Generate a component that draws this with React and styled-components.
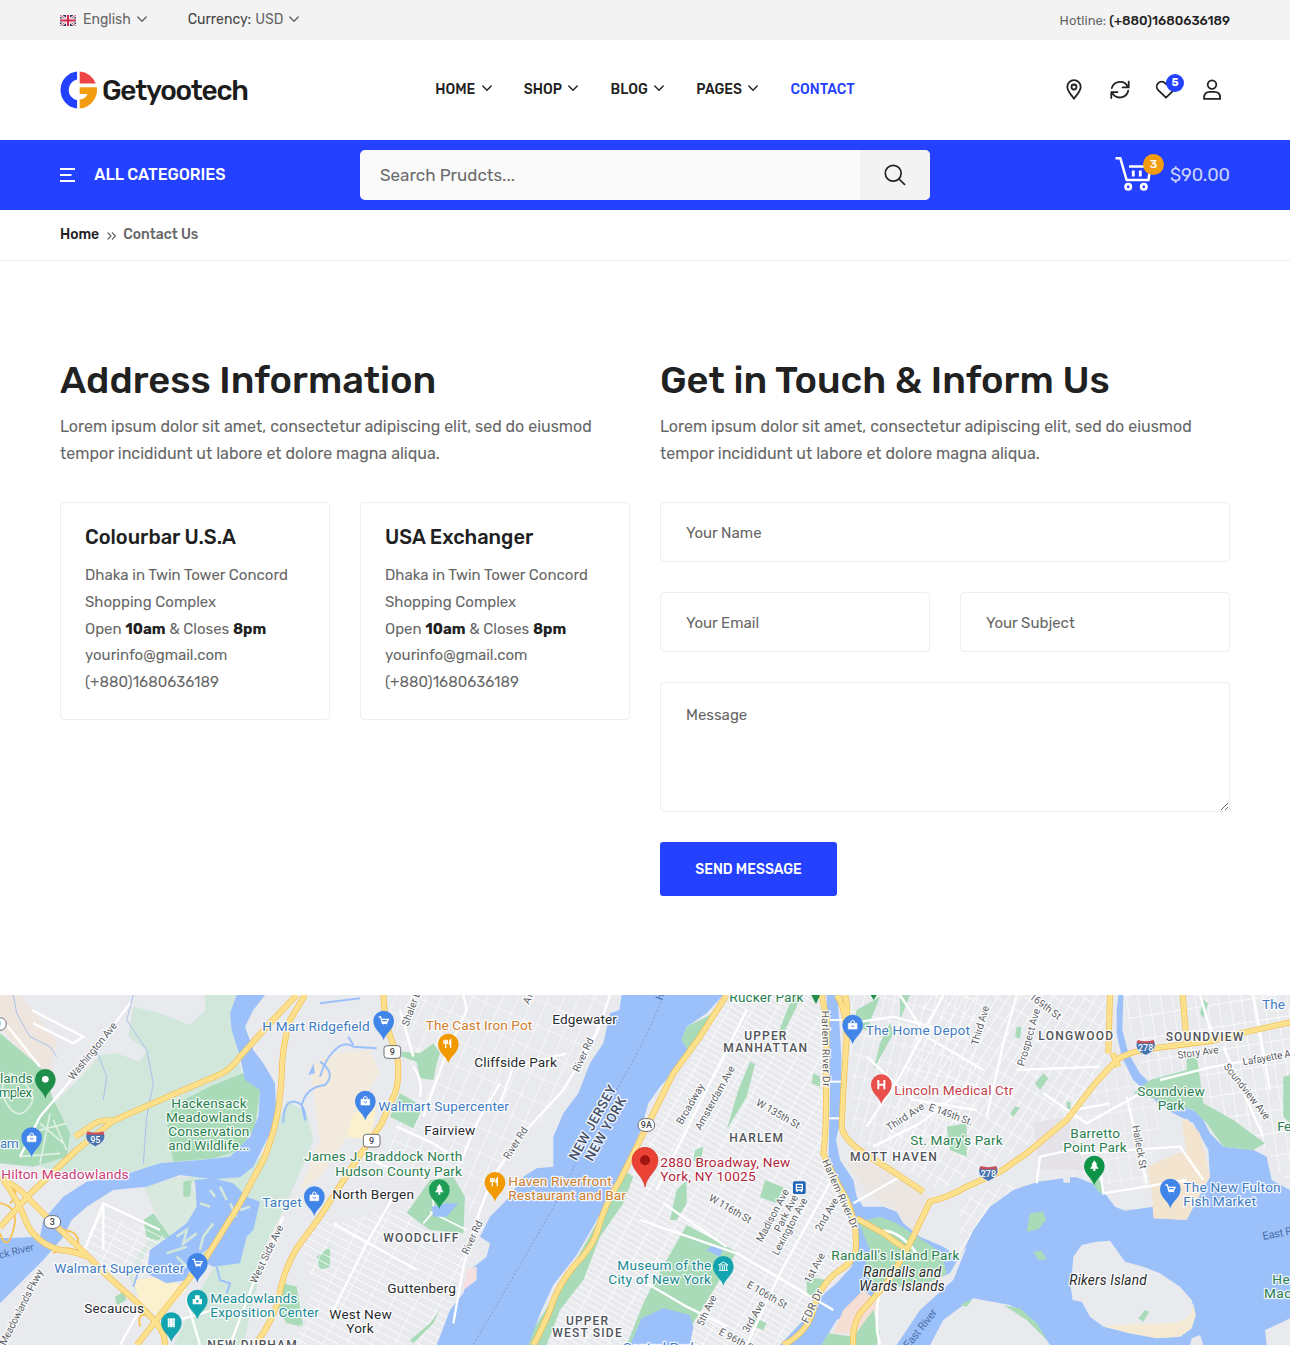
import React from "react";
import styled, { createGlobalStyle } from "styled-components";

const BLUE = "#2441ff";
const INK = "#212121";
const GREY = "#666";

const GlobalStyle = createGlobalStyle`
  *, *::before, *::after { box-sizing: border-box; }
  body {
    margin: 0;
    background: #fff;
    color: ${GREY};
    font-family: Rubik, Roboto, "Liberation Sans", sans-serif;
    font-size: 14px;
    line-height: 1.2;
  }
  a { color: inherit; text-decoration: none; }
  h2, h3, p { margin: 0; }
`;

const Page = styled.div`
  width: 1290px;
  height: 1345px;
  overflow: hidden;
  display: flex;
  flex-direction: column;
`;

/* ---------- top bar ---------- */
const TopBar = styled.div`
  flex: none;
  height: 40px;
  padding: 0 60px;
  display: flex;
  align-items: center;
  justify-content: space-between;
  background: #f3f3f3;
`;
const TopGroup = styled.div`
  display: flex;
  align-items: center;
  gap: 41px;
`;
const Picker = styled.a`
  display: flex;
  align-items: center;
  gap: 6px;
`;
const PickerText = styled.span`
  color: ${GREY};
`;
const PickerLabel = styled.span`
  color: #444;
  margin-right: -2px;
`;
const FlagArt = styled.svg`
  margin-top: 2px;
`;
const Hotline = styled.div`
  font-size: 13px;
  padding-top: 1px;
`;
const HotlineNumber = styled.a`
  color: ${INK};
  font-weight: 500;
`;

/* ---------- header ---------- */
const Header = styled.header`
  flex: none;
  height: 100px;
  padding: 0 60px;
  display: grid;
  grid-template-columns: 1fr auto 1fr;
  align-items: center;
`;
const Logo = styled.a`
  display: flex;
  align-items: center;
  gap: 5px;
  margin-left: -1px;
`;
const LogoText = styled.span`
  padding-top: 2px;
  font-size: 28px;
  font-weight: 500;
  letter-spacing: -1.25px;
  color: #1c1c1c;
`;
const Nav = styled.nav`
  display: flex;
  gap: 32.3px;
`;
const NavLink = styled.a`
  display: flex;
  align-items: center;
  gap: 6.3px;
  font-weight: 500;
  color: ${(p) => (p.$active ? BLUE : INK)};
  svg { margin-bottom: 2px; }
`;
const Actions = styled.div`
  display: flex;
  justify-content: flex-end;
  gap: 10px;
`;
const IconButton = styled.a`
  position: relative;
  width: 36px;
  height: 36px;
  display: grid;
  place-items: center;
  color: #222;
`;
const Badge = styled.span`
  position: absolute;
  top: ${(p) => p.$top}px;
  left: ${(p) => p.$left}px;
  width: ${(p) => p.$size}px;
  height: ${(p) => p.$size}px;
  display: grid;
  place-items: center;
  border-radius: 50%;
  background: ${(p) => p.$bg};
  color: #fff;
  font-size: ${(p) => p.$font}px;
  font-weight: ${(p) => p.$weight || 500};
`;

/* ---------- blue bar ---------- */
const BlueBar = styled.div`
  flex: none;
  height: 70px;
  padding: 0 60px;
  display: grid;
  grid-template-columns: 300px 570px 1fr;
  align-items: center;
  background: ${BLUE};
`;
const Categories = styled.a`
  display: flex;
  align-items: center;
  gap: 18.3px;
  color: #fff;
  font-size: 16px;
  font-weight: 500;
  line-height: 20px;
`;
const Search = styled.form`
  display: flex;
  height: 50px;
  border-radius: 5px;
  overflow: hidden;
  background: #fafafb;
`;
const SearchInput = styled.input`
  flex: 1;
  border: 0;
  outline: 0;
  padding: 0 20px;
  background: none;
  font: 400 17px/1.2 Rubik, Roboto, sans-serif;
  &::placeholder { color: #6b6b6b; opacity: 1; }
`;
const SearchButton = styled.button`
  width: 70px;
  border: 0;
  padding: 0 0 1px;
  display: grid;
  place-items: center;
  background: #f3f3f3;
  color: #222;
`;
const Cart = styled.a`
  position: relative;
  justify-self: end;
  width: 115px;
  height: 36px;
  display: flex;
  align-items: center;
  justify-content: space-between;
  color: #cdd4fb;
  font-size: 18px;
`;
const CartTotal = styled.span`
  padding-top: 2px;
`;

/* ---------- breadcrumb ---------- */
const Breadcrumb = styled.div`
  flex: none;
  height: 51px;
  padding: 1px 60px 0;
  display: flex;
  align-items: center;
  gap: 7.500px;
  border-bottom: 1px solid #eee;
  font-weight: 500;
`;
const Crumb = styled.a`
  color: ${(p) => (p.$home ? INK : GREY)};
`;

/* ---------- contact section ---------- */
const Main = styled.main`
  flex: none;
  height: 734px;
  padding: 95px 60px 0;
  display: grid;
  grid-template-columns: 570px 570px;
  column-gap: 30px;
  align-items: start;
`;
const Title = styled.h2`
  color: ${INK};
  font-size: 38px;
  font-weight: 500;
  line-height: 48px;
`;
const Lead = styled.p`
  margin: 9px 0 35px;
  font-size: 16px;
  line-height: 27px;
`;
const Cards = styled.div`
  display: grid;
  grid-template-columns: 1fr 1fr;
  gap: 30px;
`;
const Card = styled.article`
  height: 218px;
  padding: 22px 24px;
  border: 1px solid #eeeeef;
  border-radius: 4px;
  font-size: 15px;
  line-height: 26.8px;
  white-space: nowrap;
`;
const CardTitle = styled.h3`
  margin-bottom: 13px;
  color: ${INK};
  font-size: 20px;
  font-weight: 500;
  line-height: 24px;
`;
const Strong = styled.strong`
  color: ${INK};
  font-weight: 700;
`;
const Form = styled.form`
  display: grid;
  grid-template-columns: 1fr 1fr;
  gap: 30px;
`;
const Field = styled.input`
  grid-column: span ${(p) => p.$span || 1};
  min-width: 0;
  height: 60px;
  padding: 1px 25px 0;
  border: 1px solid #eeeeef;
  border-radius: 4px;
  outline: 0;
  font: 400 15px/1.2 Rubik, Roboto, sans-serif;
  &::placeholder { color: ${GREY}; opacity: 1; }
`;
const MessageField = styled.textarea`
  grid-column: span 2;
  display: block;
  height: 130px;
  padding: 23px 25px;
  border: 1px solid #eeeeef;
  border-radius: 4px;
  outline: 0;
  resize: vertical;
  font: 400 15px/18px Rubik, Roboto, sans-serif;
  &::placeholder { color: ${GREY}; opacity: 1; }
`;
const SendButton = styled.button`
  width: 177px;
  height: 54px;
  padding: 2px 0 0;
  border: 0;
  border-radius: 3px;
  background: ${BLUE};
  color: #fff;
  font: 500 14px/1 Rubik, Roboto, sans-serif;
`;

/* ---------- map ---------- */
const MapFrame = styled.section`
  flex: none;
  height: 350px;
  overflow: hidden;
  svg { display: block; }
`;
const MapText = styled.text`
  font-family: Roboto, "Liberation Sans", sans-serif;
  font-size: ${(p) => p.$size}px;
  font-weight: ${(p) => p.$weight};
  font-style: ${(p) => (p.$italic ? "italic" : "normal")};
  fill: ${(p) => p.$fill};
  stroke: ${(p) => p.$halo};
  stroke-width: ${(p) => (p.$halo === "none" ? 0 : 8)}px;
  stroke-linejoin: round;
  paint-order: stroke;
`;

/* ---------- icons ---------- */
const Chevron = ({ size = 10 }) => (
  <svg width={size} height="7" viewBox="0 0 10 7" fill="none" stroke="currentColor" strokeWidth="1.4" strokeLinecap="round" strokeLinejoin="round">
    <path d="M.8 1 5 5.3 9.2 1" />
  </svg>
);
const Flag = () => (
  <FlagArt width="17" height="11" viewBox="0 0 17 11">
    <rect width="16" height="11" fill="#2b2f63" />
    <path d="M0 0 16 11M16 0 0 11" stroke="#fff" strokeWidth="2.6" />
    <path d="M0 0 16 11M16 0 0 11" stroke="#c8405c" strokeWidth=".9" />
    <path d="M8 0V11M0 5.5H16" stroke="#fff" strokeWidth="4" />
    <path d="M8 0V11M0 5.5H16" stroke="#cc2b4b" strokeWidth="2.2" />
  </FlagArt>
);
const LogoMark = () => (
  <svg width="38" height="38" viewBox="0 0 38 38">
    <path d="M18.1.6A18.5 18.5 0 0 0 18.1 37.4V29.200A10.500 10.500 0 0 1 18.1 8.600Z" fill={BLUE} />
    <path d="M20.700 .6V12.6H36.8A18.5 18.5 0 0 0 20.700 .6Z" fill="#ee4443" />
    <path d="M20.700 16.3H37.8A18.4 18.4 0 0 1 20.700 37.4V28.6A9 9 0 0 0 28.500 23H20.700Z" fill="#f29c12" />
  </svg>
);
const PinIcon = () => (
  <svg width="24" height="24" viewBox="0 0 24 24" fill="none" stroke="currentColor" strokeWidth="1.8" strokeLinejoin="round">
    <path d="M12 20.7C9.2 16.7 5.3 12.900 5.300 8.900a6.700 6.700 0 0 1 13.400 0c0 4-3.900 7.800-6.700 11.800Z" />
    <circle cx="12" cy="9" r="2.500" />
  </svg>
);
const RefreshIcon = () => (
  <svg width="24" height="24" viewBox="0 0 24 24" fill="none" stroke="currentColor" strokeWidth="1.8" strokeLinecap="round" strokeLinejoin="round">
    <path d="M3.800 10.100A8.600 8.600 0 0 1 19.800 8.600M20.700 3.600V9.400H14.600" />
    <path d="M20.200 12.700A8.600 8.600 0 0 1 4.200 14.900M3.300 20V14.200H9.400" />
  </svg>
);
const HeartIcon = () => (
  <svg width="24" height="24" viewBox="0 0 24 24" fill="none" stroke="currentColor" strokeWidth="1.8" strokeLinejoin="round">
    <path d="M12 19.600 4.200 12.100A4.900 4.900 0 0 1 11.200 5.200L12 6 12.800 5.200A4.900 4.900 0 0 1 19.800 12.100Z" />
  </svg>
);
const UserIcon = () => (
  <svg width="24" height="24" viewBox="0 0 24 24" fill="none" stroke="currentColor" strokeWidth="1.8" strokeLinejoin="round">
    <circle cx="12" cy="6.600" r="4.300" />
    <path d="M4.100 20.900V19.600Q4.100 13.900 9.600 13.900H14.600Q20.100 13.900 20.100 19.600V20.900Z" />
  </svg>
);
const MenuIcon = () => (
  <svg width="16" height="14" viewBox="0 0 16 14" stroke="#fff" strokeWidth="2">
    <path d="M0 1H15M0 7H11.500M0 13H15" />
  </svg>
);
const SearchIcon = () => (
  <svg width="22" height="22" viewBox="0 0 22 22" fill="none" stroke="currentColor" strokeWidth="1.700" strokeLinecap="round">
    <circle cx="9.200" cy="9.200" r="7.900" />
    <path d="M15 15 20.500 20.400" />
  </svg>
);
const CartIcon = () => (
  <svg width="38" height="36" viewBox="0 0 38 36" fill="none" stroke="#fff" strokeWidth="2.500" strokeLinejoin="round">
    <path d="M.500 1.200H5.300L11.600 23H33.500L35.300 9.500H14" />
    <path d="M18.300 13.500V19.500M25.300 13.500V19.500" strokeWidth="2.800" />
    <circle cx="13.200" cy="29.800" r="2.700" strokeWidth="2.600" />
    <circle cx="28.800" cy="29.800" r="2.700" strokeWidth="2.600" />
  </svg>
);
const CrumbIcon = () => (
  <svg width="9" height="8" viewBox="0 0 9 8" fill="none" stroke="#666" strokeWidth="1.200">
    <path d="M.600.500 4 4 .600 7.500M5 .500 8.400 4 5 7.500" />
  </svg>
);

/* ---------- map data: one unit is a third of a pixel ---------- */
const WATER = "#9cc0fa";
const PARK = "#a9dbb9";
const MARSH = "#d1e7dc";

const GLYPHS = {
  cart: <path d="M-15 -12H-9L-4 7H11M-7 -5H14L10 3H-5M-2 12h1M9 12h1" fill="none" stroke="#fff" strokeWidth="4" />,
  bag: (
    <>
      <path d="M-13 -5H13V12H-13Z" fill="#fff" stroke="#fff" strokeWidth="2" />
      <path d="M-6 -5Q-6 -14 0 -14Q6 -14 6 -5" fill="none" stroke="#fff" strokeWidth="3" />
      <path d="M-5 2Q0 7 5 2" fill="none" stroke="#4285e8" strokeWidth="3" />
    </>
  ),
  food: <path d="M-8 -13V12M-13 -13V-3H-3V-13M7 12V-13Q2 -8 3 0H7" fill="none" stroke="#fff" strokeWidth="4" />,
  tree: <path d="M0 -17 9 -4H5L13 8H3V15H-3V8H-13L-5 -4H-9Z" fill="#fff" />,
  dot: <circle r="10" fill="#fff" />,
  hospital: <path d="M-9 -14V14M9 -14V14M-9 0H9" fill="none" stroke="#fff" strokeWidth="6" />,
  museum: <path d="M-14 -4 0 -13 14 -4ZM-10 -1V10M-3 -1V10M3 -1V10M10 -1V10M-14 12H14" fill="none" stroke="#fff" strokeWidth="3" />,
  camera: (
    <>
      <path d="M-14 -3H14V13H-14ZM-7 -3V-14H7V-3" fill="#fff" />
      <circle cy="4" r="4" fill="#12a4af" />
    </>
  ),
  ticket: <path d="M-11 -14H11V14H-11ZM-5 -14V14M5 -14V14" fill="#fff" stroke="#12a4af" strokeWidth="2" strokeDasharray="4 3" />,
};
const PINS = [
  [136, 268, "#1e8e4a", "dot"], [95, 443, "#4285e8", "bag"], [943, 620, "#4285e8", "bag"],
  [592, 820, "#4285e8", "cart"], [592, 930, "#12a4af", "camera"], [514, 998, "#12a4af", "ticket"],
  [1151, 93, "#4285e8", "cart"], [1345, 162, "#f29900", "food"], [1096, 333, "#4285e8", "bag"],
  [1318, 599, "#1e9e57", "tree"], [1485, 577, "#f29900", "food"], [2170, 829, "#12a4af", "museum"],
  [2558, 105, "#4285e8", "bag"], [2644, 284, "#e8504b", "hospital"], [3283, 528, "#0f9347", "tree"],
  [3511, 597, "#4285e8", "cart"],
];
const Pin = ({ x, y, fill, glyph }) => (
  <g transform={`translate(${x} ${y})`}>
    <path d="M0 58C-4 38 -31 26 -31 0A31 31 0 0 1 31 0C31 26 4 38 0 58Z" fill={fill} />
    {GLYPHS[glyph]}
  </g>
);

const INKMAP = "#2a2c2f", AREA = "#50545a", PGREEN = "#2b8050", SHOP = "#3f7cc4", FOOD = "#d07d2c", ROAD = "#5b6066", TEAL = "#1a8b95";
/* x, baseline y, drawn width, text, colour, size, rotation, options */
const LABELS = [
  [0, 278, 98, "lands", PGREEN, 41], [-4, 320, 100, "mplex", PGREEN, 41], [0, 473, 56, "am", SHOP, 41],
  [4, 567, 382, "Hilton Meadowlands", "#cc3d78", 41],
  [514, 354, 226, "Hackensack", PGREEN, 41], [498, 396, 258, "Meadowlands", PGREEN, 41],
  [505, 438, 243, "Conservation", PGREEN, 41], [505, 480, 244, "and Wildlife...", PGREEN, 41],
  [787, 124, 322, "H Mart Ridgefield", SHOP, 41], [912, 514, 475, "James J. Braddock North", PGREEN, 41],
  [1006, 558, 380, "Hudson County Park", PGREEN, 41],
  [787, 651, 118, "Target", SHOP, 41], [163, 848, 390, "Walmart Supercenter", SHOP, 41],
  [631, 938, 261, "Meadowlands", TEAL, 41], [631, 980, 326, "Exposition Center", TEAL, 41],
  [253, 969, 179, "Secaucus", INKMAP, 41], [622, 1076, 268, "NEW DURHAM", AREA, 36, 0, { w: 500 }],
  [1277, 119, 320, "The Cast Iron Pot", FOOD, 41], [1657, 101, 194, "Edgewater", INKMAP, 41],
  [1423, 230, 248, "Cliffside Park", INKMAP, 41], [1135, 362, 392, "Walmart Supercenter", SHOP, 41],
  [1273, 434, 153, "Fairview", INKMAP, 41], [997, 626, 245, "North Bergen", INKMAP, 41],
  [1150, 755, 225, "WOODCLIFF", AREA, 36, 0, { w: 500 }], [1162, 909, 206, "Guttenberg", INKMAP, 41],
  [988, 986, 187, "West New", INKMAP, 41], [1039, 1029, 82, "York", INKMAP, 41],
  [1525, 587, 310, "Haven Riverfront", FOOD, 41], [1525, 630, 353, "Restaurant and Bar", FOOD, 41],
  [1698, 1004, 126, "UPPER", AREA, 36, 0, { w: 500 }], [1657, 1041, 208, "WEST SIDE", AREA, 36, 0, { w: 500 }],
  [1852, 840, 282, "Museum of the", TEAL, 41], [1825, 882, 308, "City of New York", TEAL, 41],
  [1868, 1086, 224, "Central Park", SHOP, 41],
  [2188, 37, 222, "Rucker Park", PGREEN, 41], [2233, 150, 126, "UPPER", AREA, 36, 0, { w: 500 }],
  [2170, 187, 251, "MANHATTAN", AREA, 36, 0, { w: 500 }], [2188, 456, 161, "HARLEM", AREA, 36, 0, { w: 500 }],
  [1981, 532, 390, "2880 Broadway, New", "#b3263a", 41], [1981, 573, 286, "York, NY 10025", "#b3263a", 41],
  [2597, 135, 313, "The Home Depot", SHOP, 41], [2683, 315, 357, "Lincoln Medical Ctr", "#c6414b", 41],
  [2731, 465, 277, "St. Mary's Park", PGREEN, 41], [2550, 513, 260, "MOTT HAVEN", AREA, 36, 0, { w: 500 }],
  [2494, 810, 384, "Randall's Island Park", PGREEN, 41],
  [2590, 861, 234, "Randalls and", INKMAP, 41, 0, { italic: true }], [2578, 903, 256, "Wards Islands", INKMAP, 41, 0, { italic: true }],
  [3115, 150, 224, "LONGWOOD", AREA, 36, 0, { w: 500 }], [3497, 152, 233, "SOUNDVIEW", AREA, 36, 0, { w: 500 }],
  [3786, 57, 69, "The", SHOP, 41], [3412, 318, 202, "Soundview", PGREEN, 41], [3473, 360, 80, "Park", PGREEN, 41],
  [3211, 444, 149, "Barretto", PGREEN, 41], [3190, 486, 190, "Point Park", PGREEN, 41],
  [3550, 607, 292, "The New Fulton", SHOP, 41], [3550, 649, 218, "Fish Market", SHOP, 41],
  [3208, 885, 232, "Rikers Island", INKMAP, 41, 0, { italic: true }],
  [3832, 423, 42, "Fe", PGREEN, 41], [3817, 882, 52, "He", PGREEN, 41], [3792, 925, 82, "Mac", PGREEN, 41],
  [219, 272, 212, "Washington Ave", ROAD, 31, -51], [768, 882, 190, "West Side Ave", ROAD, 31, -64],
  [16, 1068, 250, "Meadowlands Pkwy", ROAD, 31, -63], [0, 806, 106, "ck River", "#4a6fa8", 31, -14],
  [1225, 110, 110, "Shaler B", ROAD, 31, -70], [1586, 45, 40, "An", ROAD, 31, -65],
  [1736, 248, 108, "River Rd", ROAD, 31, -65], [1526, 510, 108, "River Rd", ROAD, 31, -57], [1403, 796, 108, "River Rd", ROAD, 31, -65],
  [1729, 514, 250, "NEW JERSEY", "#455068", 40, -61, { w: 500 }], [1777, 516, 212, "NEW YORK", "#455068", 40, -61, { w: 500 }],
  [2046, 406, 136, "Broadway", ROAD, 31, -60], [2102, 422, 214, "Amsterdam Ave", ROAD, 31, -61],
  [2266, 344, 146, "W 135th St", ROAD, 31, 30], [2124, 630, 142, "W 116th St", ROAD, 31, 30],
  [2286, 758, 174, "Madison Ave", ROAD, 31, -62], [2340, 728, 120, "Park Ave", ROAD, 31, -63], [2334, 798, 190, "Lexington Ave", ROAD, 31, -62],
  [2462, 726, 110, "2nd Ave", ROAD, 31, -60], [2430, 882, 98, "1st Ave", ROAD, 31, -62],
  [2238, 890, 134, "E 106th St", ROAD, 31, 30], [2154, 1032, 122, "E 96th St", ROAD, 31, 28],
  [2108, 1010, 98, "5th Ave", ROAD, 31, -64], [2244, 1030, 104, "3rd Ave", ROAD, 31, -60],
  [2465, 62, 228, "Harlem River Dr", ROAD, 31, 89], [2466, 514, 224, "Harlem River Dr", ROAD, 31, 66],
  [2424, 1002, 108, "FDR Dr", ROAD, 33, -65],
  [2668, 424, 128, "Third Ave", ROAD, 31, -33], [2784, 360, 138, "E 149th St.", ROAD, 31, 20],
  [2934, 168, 122, "Third Ave", ROAD, 31, -74], [3072, 230, 178, "Prospect Ave", ROAD, 31, -74],
  [3086, 24, 110, "169th St", ROAD, 31, 37], [3534, 206, 124, "Story Ave", ROAD, 31, -8],
  [3730, 226, 160, "Lafayette Av", ROAD, 31, -10], [3670, 230, 204, "Soundview Ave", ROAD, 31, 52],
  [3397, 408, 132, "Halleck St", ROAD, 31, 80], [3790, 750, 112, "East Riv", "#4a6fa8", 33, -11],
  [2726, 1078, 140, "East River", "#4a6fa8", 33, -52], [1986, 32, 30, "Hu", "#4a6fa8", 31, -70],
];
const MapLabel = ({ row: [x, y, w, text, fill, size, rot = 0, o = {}] }) => (
  <MapText
    x={x} y={y} textLength={w} transform={rot ? `rotate(${rot} ${x} ${y})` : undefined}
    $fill={fill} $size={size} $weight={o.w || 400} $italic={o.italic} $halo={fill === "#4a6fa8" ? "none" : "rgba(255,255,255,.85)"}
  >
    {text}
  </MapText>
);

const HIGHWAYS = [
  "M890 15 800 110 720 200Q690 245 640 262L500 322 340 392 230 480 90 612 0 712",
  "M915 15 870 90Q845 170 845 260Q838 400 790 510L720 640 620 800 540 900 410 1065",
  "M0 560 60 600 150 690 240 775 330 865 420 945 470 1000Q495 1030 495 1065",
  "M10 570Q60 640 80 700Q110 760 180 780Q230 785 260 800",
  "M340 392Q300 385 270 410L225 440",
  "M1150 15 1155 80Q1165 130 1190 190Q1202 260 1185 310L1145 400 1070 510 960 680 890 775Q850 840 835 930Q820 990 765 1065",
  "M2180 15 2100 140 2020 250 1960 370 1925 440 1860 570Q1815 640 1795 715Q1780 770 1725 825Q1670 890 1650 960Q1625 1020 1600 1065",
  "M2510 15Q2540 60 2540 140L2530 300 2525 410Q2530 450 2600 495L2680 545 2770 605",
  "M2535 15Q2545 50 2540 90",
  "M2465 15 2480 90 2478 340Q2478 430 2470 490Q2500 560 2535 620Q2570 690 2568 760Q2570 810 2520 840Q2460 880 2440 960Q2420 1030 2350 1065",
  "M2560 1065Q2555 1010 2580 970L2660 880 2720 780 2790 635Q2850 620 2900 590L3000 545 3080 490 3200 390 3290 275 3350 210Q3390 180 3500 170L3640 152 3720 130 3870 97",
  "M2570 685 2650 730 2720 780",
  "M3330 15 3325 190", "M3548 15 3560 160", "M3338 190 3355 230",
];
const LOCAL_ROADS = [
  "M390 40 230 250 120 380 60 500", "M0 80 120 230M95 60 250 140 220 160 100 100", "M850 680 760 880 690 1065",
  "M1390 15 1400 60 1340 190 1270 380M1830 15 1790 130 1690 300 1560 440 1480 560 1440 660 1390 830 1360 1000",
  "M1200 60 1240 200M1240 230Q1270 270 1260 320M1500 280 1430 400 1380 520M1700 190 1540 230 1500 340",
  "M1190 410 1300 460 1390 520M1090 500 1230 560M1000 700 1250 840M1180 620 1100 760 1000 960",
  "M1920 690 2210 790 2500 960M1990 640 2180 770M2240 1065 2340 850 2500 560M1970 600 2100 340 2240 60",
  "M1940 880 2060 950 2180 1010", "M2550 100 2680 80 2900 140M2600 200 2740 330 2930 360M2700 15 2780 140 2950 240M2620 470 2760 400 2900 290",
  "M2830 15 2700 260 2600 410M2560 640 2700 560", "M3050 15 3010 160 2960 380M3050 240 3300 230M3130 310 3260 400 3440 300",
  "M3380 320 3440 580M3240 490 3540 470 3610 570M3300 530 3310 610 3560 570", "M3140 440 3220 360 3330 340M3110 580 3120 500 3260 470",
  "M3480 270 3640 230 3870 190M3670 170 3790 440M3600 15 3640 150M3760 15 3810 300",
  "M250 790 310 640 480 720M310 640V780M430 940 360 1065M560 930 600 1065M500 1000 640 960",
];

const Streets = ({ id, w, h, rot, sw = 4 }) => (
  <pattern id={id} width={w} height={h} patternUnits="userSpaceOnUse" patternTransform={`rotate(${rot})`}>
    <path d={`M0 0H${w}M0 0V${h}`} stroke="#fff" strokeWidth={sw} fill="none" />
  </pattern>
);
const Shield = ({ x, y, text, kind }) => (
  <g transform={`translate(${x} ${y})`}>
    {kind === "i" ? (
      <>
        <path d="M-26 -20Q0 -14 26 -20Q38 8 0 24Q-38 8 -26 -20Z" fill="#4673ad" stroke="#fff" strokeWidth="2" />
        <path d="M-24 -22Q0 -15 24 -22L27 -12H-27Z" fill="#c8505a" />
      </>
    ) : (
      <rect x="-25" y="-19" width="50" height="38" rx={kind === "round" ? 19 : 9} fill="#fff" stroke="#6b6f74" strokeWidth="3" />
    )}
    <MapText x="0" y={kind === "i" ? 12 : 10} textAnchor="middle" $size={kind === "i" ? 27 : 27} $weight={500} $fill={kind === "i" ? "#fff" : "#44484d"} $halo="none">
      {text}
    </MapText>
  </g>
);

const CityMap = () => (
  <svg width="1290" height="350" viewBox="0 15 3870 1050" preserveAspectRatio="none">
    <defs>
      <Streets id="manhattan" w={62} h={17} rot={30} />
      <Streets id="jersey" w={64} h={22} rot={27} />
      <Streets id="cliffs" w={42} h={70} rot={24} sw={3.500} />
      <Streets id="bronx" w={46} h={28} rot={-58} sw={3.500} />
      <Streets id="sound" w={34} h={68} rot={-9} />
      <Streets id="melrose" w={30} h={62} rot={14} sw={3.500} />
    </defs>
    <rect y="15" width="3870" height="1050" fill="#e9eaee" />

    {/* land tints and wetlands */}
    <path d="M0 15H60L170 150 150 260 60 180 0 110Z" fill="#eee5df" />
    <path d="M400 50 480 70 570 105 615 60 615 15H710L700 120 725 250 780 300 770 420 700 500 500 520 300 570 120 530 210 450 150 350 235 270 300 195 350 190 420 215 440 180 385 140Z" fill={MARSH} />
    <path d="M860 330 920 370 940 450 860 640 800 760 730 1065H520L600 900 700 740 640 640 560 560 720 560 800 480Z" fill={MARSH} />
    <path d="M420 570 560 560 600 640 540 730 440 780 400 860 480 940 420 930 380 850 480 700Z" fill="#d9e9e0" />
    <path d="M930 230 1000 190 1110 180 1140 250 1080 340 1040 440 960 560 900 600 960 450Z" fill="#f1eadd" />
    <path d="M400 870 500 860 560 900 480 980 420 940ZM1060 370 1130 350 1110 450 1040 440Z" fill="#fbf1cf" />
    <path d="M0 130 60 180 130 240 160 330 210 430 200 500 100 530 0 520Z" fill={PARK} />
    <path d="M30 250Q-10 290 20 340T80 360 90 300 30 250M120 400 190 460M150 370 120 520M80 430 200 400M60 500 180 490M160 390 200 480" fill="none" stroke="#dff0e5" strokeWidth="5" />
    <path d="M500 390 520 345 640 285 740 245 780 300 765 410 720 480 640 505 520 515Z" fill={PARK} />
    <path d="M430 690 460 670 510 740 470 750 440 740ZM550 575 575 570 570 620 550 620ZM345 920 370 905 380 930 350 945ZM850 880 890 890 910 1010 860 1000 830 950ZM950 800 990 770V830L960 840Z" fill={PARK} />

    {/* street grids */}
    <path d="M230 800 300 660 500 740 440 860 380 860ZM880 1065 960 830 1000 700 1260 640 1300 760 1420 780 1350 960 1310 1065ZM940 880 900 760 980 680 1050 800Z" fill="url(#jersey)" />
    <path d="M1160 15H1830L1790 130 1690 320 1540 480 1440 640 1390 680 1300 560 1130 560 1200 400 1260 280 1200 160Z" fill="url(#cliffs)" />
    <path d="M1935 450 2180 15H2465L2470 500 2570 720 2530 840 2340 1065H1610L1700 900 1800 760Z" fill="url(#manhattan)" />
    <path d="M2540 15H2960L2930 380 2760 560 2560 440Z" fill="url(#melrose)" />
    <path d="M2780 15H3330L3330 190 3200 390 3020 500 2820 600 2640 500Z" fill="url(#bronx)" />
    <path d="M3360 15H3870V600L3800 480 3640 360 3600 250 3440 270Z" fill="url(#sound)" />
    <path d="M3250 250 3380 230 3480 360 3460 600 3200 560 3100 480Z" fill="url(#sound)" opacity=".6" />
    <path d="M2880 630 3010 580 3080 600 2960 660 2880 790Z" fill="url(#bronx)" />
    <path d="M2540 520 2600 500 2790 620 2740 730 2680 660 2600 610Z" fill="#ebe6e2" />
    <path d="M3100 400 3200 380 3260 540 3120 540Z" fill="#e5e3e8" />

    {/* parks */}
    <path d="M2060 705 2210 785 2110 950 2060 1030 1880 1065 1930 940 1960 880Z" fill={PARK} />
    <path d="M2295 570 2350 592 2345 645 2280 622ZM2030 600 2060 570 2060 640 2030 690 2010 690ZM2250 215 2265 222 2240 320 2180 420 2215 300ZM2085 480 2110 470 2100 530 2080 510ZM2390 50 2345 140 2330 140 2380 15H2400ZM2440 250 2460 260V290L2435 280Z" fill={PARK} />
    <path d="M2570 60 2640 20 2600 120 2560 110ZM2640 160 2670 100 2680 130 2620 240ZM2840 410 2900 400 2900 500 2850 480ZM2700 15H2730L2700 90ZM2420 860 2480 870 2440 920 2420 910ZM2260 980 2300 1000 2290 1020 2260 1010Z" fill={PARK} />
    <path d="M1205 185 1260 190 1300 160 1320 190 1310 220 1300 270 1260 265 1250 215 1205 200ZM1200 310 1270 350 1240 415 1170 380ZM1220 670 1290 570 1360 560 1395 620 1390 730 1290 720ZM1320 960 1300 1000 1240 1060 1230 1050 1290 1000Z" fill={PARK} />
    <path d="M1270 700 1300 665 1300 600M1290 665 1400 720" stroke="#fff" strokeWidth="5" fill="none" />
    <path d="M1295 650 1340 640 1375 640 1340 680 1300 680Z" fill={WATER} />
    <path d="M3105 280 3130 250 3145 265 3120 300ZM3050 110 3065 112 3060 145 3045 142ZM3200 335 3212 335V358H3200ZM3850 260 3870 255V400L3850 380ZM3610 30 3625 40 3610 85 3600 70ZM3045 350 3060 352 3040 380 3030 372Z" fill={PARK} />
    <path d="M1920 380 1935 390 1870 540 1900 560 1870 640 1800 740 1750 870 1680 960 1640 1065H1570L1700 860 1790 700 1860 560Z" fill={PARK} />

    {/* meadowlands water */}
    <path d="M710 15H795L760 60 735 110 760 180 790 220 825 280 830 400 800 450 760 530 720 562 640 568 540 555 440 590 340 600 260 650 215 690 190 740 130 810 90 850 0 940V745L120 740 130 690 190 620 260 575 370 555 480 520 600 510 690 500 750 440 775 380 780 300 735 270 720 200 695 120 690 70Z" fill={WATER} />
    <path d="M585 570 640 565 700 580 740 620 780 635 760 720 740 740 720 820 640 830 580 800 560 870 500 880 440 850 450 780 520 730 560 700 590 650Z" fill={WATER} />
    <path d="M530 740 560 720 550 760 590 730M600 640 630 650M660 590 680 630M640 700 610 740 600 780M500 790 560 770M560 830 530 800M690 640 710 680M630 600 645 620M720 660 750 650M650 760 600 800 620 830" fill="none" stroke={MARSH} strokeWidth="8" />
    <path d="M40 15 50 70 90 140 150 170 170 200M400 15 380 90 440 180 460 280 440 380 430 520M290 180 320 260 310 330" fill="none" stroke="#a9c2ea" strokeWidth="3" />
    <path d="M850 400Q850 335 880 335T915 375 905 345Q920 290 975 285Q1010 250 960 215M960 260Q975 210 1000 185Q1030 150 1060 170L1130 175M960 40 1080 25M1060 165 1045 140M650 830 660 870 690 880 680 910M420 830 400 890" fill="none" stroke={WATER} strokeWidth="6" />
    <path d="M940 220 925 255 945 250Z" fill={WATER} />

    {/* rivers and bay */}
    <path d="M1865 15 1858 60 1830 70 1810 160 1770 220 1735 310 1690 370 1660 440 1660 530 1610 535 1570 560 1520 630 1470 680 1440 740 1470 760 1460 800 1410 840 1390 910 1350 960 1310 1065H1585L1625 960 1660 885 1730 795 1785 700 1840 600 1880 530 1925 410 1945 340 1980 290 2070 190 2045 150 2060 110 2120 70 2170 15Z" fill={WATER} />
    <path d="M2045 150 2060 110 2130 75 2165 30 2130 90 2070 190Z" fill={PARK} />
    <path d="M1400 840 1430 830 1430 870 1390 900Z" fill="#f6dfe0" />
    <path d="M1990 15Q1950 120 1890 230L1760 450Q1690 600 1650 670L1420 1065" fill="none" stroke="#7f9bc8" strokeWidth="3" strokeDasharray="6 6" />
    <path d="M2480 15H2512L2518 100 2524 200 2524 380 2508 450 2520 510 2560 570 2570 620 2590 650 2650 650 2690 665 2710 700 2760 740 2830 770 2880 805 2920 720 2970 650 3040 600 3115 575 3190 565V578H3210V562H3230L3300 590 3345 650 3375 662 3460 650 3465 685 3560 690 3580 650 3630 560 3625 480 3580 400 3520 370 3470 335 3400 270 3365 200 3350 130V60L3355 15H3370L3367 120 3385 190 3420 250 3500 330 3600 370 3630 430 3670 470 3760 480 3800 500 3815 570 3870 600V1065H2340L2420 980 2450 930 2510 880 2555 830 2565 740 2530 640 2485 540 2490 300Z" fill={WATER} />
    <path d="M1925 985 1990 955 2070 975 2080 1010 2070 1065H1890ZM2120 780 2140 765 2170 775 2160 800Z" fill={WATER} />
    <path d="M3440 530 3560 480 3545 400 3560 385 3600 430 3630 560 3580 650 3560 690 3460 685 3455 600Z" fill="#f2e4cf" />
    <path d="M3400 310 3450 270 3560 240 3560 200 3590 195 3610 340 3700 390 3795 460 3760 480 3670 470 3620 400 3580 360 3480 330Z" fill={PARK} />
    <path d="M3270 570 3290 550 3310 600 3300 612Z" fill={PARK} />
    <path d="M2575 695 2640 680 2690 700 2760 745 2825 790 2840 850 2760 910 2640 900 2590 850 2610 780Z" fill={PARK} />
    <path d="M2590 950 2640 895 2780 880 2850 850 2880 795 2900 770 2860 870 2760 960 2690 1065H2465L2510 990Z" fill="#e9eaee" />
    <path d="M2530 960 2590 900 2640 940 2600 1000 2560 1030 2500 1030Z" fill="#f5dfd5" />
    <path d="M2620 960 2640 1030 2630 1065H2465L2485 1030 2560 1040Z" fill={PARK} />
    <path d="M2630 725Q2690 710 2750 790M2640 900Q2620 990 2640 1065" fill="none" stroke="#fff" strokeWidth="8" />
    <path d="M2790 1065 2830 990 2870 960 2920 925 3030 945 3100 990 3150 1065Z" fill="#e9eaee" />
    <path d="M2880 945 2920 925 2900 950ZM3010 945 3060 955 3110 1000 3145 1055 3080 990Z" fill={PARK} />
    <path d="M3215 860 3220 800 3245 765 3290 755 3330 752 3350 780 3375 815 3430 830 3480 850 3540 890 3575 930 3587 975 3575 1015 3540 1040 3470 1045 3390 1030 3310 1010 3270 980 3245 935 3218 930 3212 890Z" fill="#e9eaee" />
    <path d="M3310 1008Q3420 1000 3500 1000T3580 940L3587 975 3575 1015 3540 1040 3470 1045 3390 1030Z" fill="#f4ead4" />
    <path d="M3080 725 3090 670 3130 665 3138 690 3115 718ZM3100 785 3125 782 3140 808 3115 810ZM3415 985 3435 960 3448 965 3430 995Z" fill={PARK} />
    <path d="M3800 1065 3795 1020 3840 1000 3870 985V1065ZM3570 1065 3575 1045 3600 1035 3610 1065Z" fill="#e9eaee" />

    {/* roads */}
    {LOCAL_ROADS.map((d) => <path key={d} d={d} fill="none" stroke="#fff" strokeWidth="7" />)}
    {[90, 275, 385].map((y) => <path key={y} d={`M2480 ${y}H2530`} stroke="#fff" strokeWidth="6" />)}
    <path d="M0 640Q60 650 40 720T0 730M180 720Q250 720 230 780M420 1010Q410 960 450 980M160 790Q200 760 240 790M10 580Q70 600 30 640" fill="none" stroke="#f3c55a" strokeWidth="6" />
    {HIGHWAYS.map((d) => <path key={d} d={d} fill="none" stroke="#f3c359" strokeWidth="18" strokeLinejoin="round" />)}
    {HIGHWAYS.map((d) => <path key={d} d={d} fill="none" stroke="#fde493" strokeWidth="13" strokeLinejoin="round" />)}
    {HIGHWAYS.map((d) => <path key={d} d={d} fill="none" stroke="#f8d67b" strokeWidth="2" strokeLinejoin="round" />)}

    <Shield x={286} y={446} text="95" kind="i" />
    <Shield x={3437} y={172} text="278" kind="i" />
    <Shield x={2965} y={550} text="278" kind="i" />
    <Shield x={157} y={696} text="3" kind="round" />
    <Shield x={-6} y={102} text="0" kind="round" />
    <Shield x={1939} y={405} text="9A" kind="round" />
    <Shield x={1177} y={186} text="9" kind="us" />
    <Shield x={1115} y={452} text="9" kind="us" />

    {LABELS.map((row, i) => <MapLabel key={i} row={row} />)}
    {PINS.map(([x, y, fill, glyph]) => <Pin key={`${x}-${y}`} x={x} y={y} fill={fill} glyph={glyph} />)}
    <path d="M2434 15H2460L2448 42ZM2612 15H2630L2621 30Z" fill="#1e8e4a" />
    <rect x="2379" y="574" width="38" height="38" rx="5" fill="#1d62b7" />
    <path d="M2389 583H2407V600H2389ZM2389 592H2407M2390 606 2394 601M2406 606 2402 601" fill="none" stroke="#fff" strokeWidth="4" />
    <g transform="translate(1935 511)">
      <path d="M0 80C-4 48 -39 32 -39 0A39 39 0 0 1 39 0C39 32 4 48 0 80Z" fill="#ea4335" stroke="#d0332a" strokeWidth="2" />
      <circle r="15" fill="#a01411" />
    </g>
  </svg>
);

const NAV = ["HOME", "SHOP", "BLOG", "PAGES"];
const SHOPS = ["Colourbar U.S.A", "USA Exchanger"];
const LEAD = ["Lorem ipsum dolor sit amet, consectetur adipiscing elit, sed do eiusmod", "tempor incididunt ut labore et dolore magna aliqua."];

const Intro = ({ title }) => (
  <>
    <Title>{title}</Title>
    <Lead>{LEAD[0]}<br />{LEAD[1]}</Lead>
  </>
);

export default function App() {
  return (
    <Page>
      <GlobalStyle />
      <TopBar>
        <TopGroup>
          <Picker href="#"><Flag /><PickerText>English</PickerText><Chevron /></Picker>
          <Picker href="#"><PickerLabel>Currency:</PickerLabel><PickerText>USD</PickerText><Chevron /></Picker>
        </TopGroup>
        <Hotline>Hotline: <HotlineNumber href="#">(+880)1680636189</HotlineNumber></Hotline>
      </TopBar>

      <Header>
        <Logo href="#"><LogoMark /><LogoText>Getyootech</LogoText></Logo>
        <Nav>
          {NAV.map((n) => <NavLink key={n} href="#">{n}<Chevron /></NavLink>)}
          <NavLink href="#" $active>CONTACT</NavLink>
        </Nav>
        <Actions>
          <IconButton href="#"><PinIcon /></IconButton>
          <IconButton href="#"><RefreshIcon /></IconButton>
          <IconButton href="#"><HeartIcon /><Badge $top={2} $left={18} $size={18} $font={11} $weight={700} $bg={BLUE}>5</Badge></IconButton>
          <IconButton href="#"><UserIcon /></IconButton>
        </Actions>
      </Header>

      <BlueBar>
        <Categories href="#"><MenuIcon />ALL CATEGORIES</Categories>
        <Search>
          <SearchInput placeholder="Search Prudcts..." />
          <SearchButton type="button"><SearchIcon /></SearchButton>
        </Search>
        <Cart href="#">
          <CartIcon />
          <Badge $top={-3} $left={28} $size={21} $font={12} $bg="#f39c12">3</Badge>
          <CartTotal>$90.00</CartTotal>
        </Cart>
      </BlueBar>

      <Breadcrumb>
        <Crumb href="#" $home>Home</Crumb>
        <CrumbIcon />
        <Crumb>Contact Us</Crumb>
      </Breadcrumb>

      <Main>
        <section>
          <Intro title="Address Information" />
          <Cards>
            {SHOPS.map((s) => (
              <Card key={s}>
                <CardTitle>{s}</CardTitle>
                <div>Dhaka in Twin Tower Concord</div>
                <div>Shopping Complex</div>
                <div>Open <Strong>10am</Strong> &amp; Closes <Strong>8pm</Strong></div>
                <div>yourinfo@gmail.com</div>
                <div>(+880)1680636189</div>
              </Card>
            ))}
          </Cards>
        </section>
        <section>
          <Intro title="Get in Touch &amp; Inform Us" />
          <Form>
            <Field $span={2} placeholder="Your Name" />
            <Field placeholder="Your Email" />
            <Field placeholder="Your Subject" />
            <MessageField placeholder="Message" />
            <SendButton type="button">SEND MESSAGE</SendButton>
          </Form>
        </section>
      </Main>

      <MapFrame><CityMap /></MapFrame>
    </Page>
  );
}
